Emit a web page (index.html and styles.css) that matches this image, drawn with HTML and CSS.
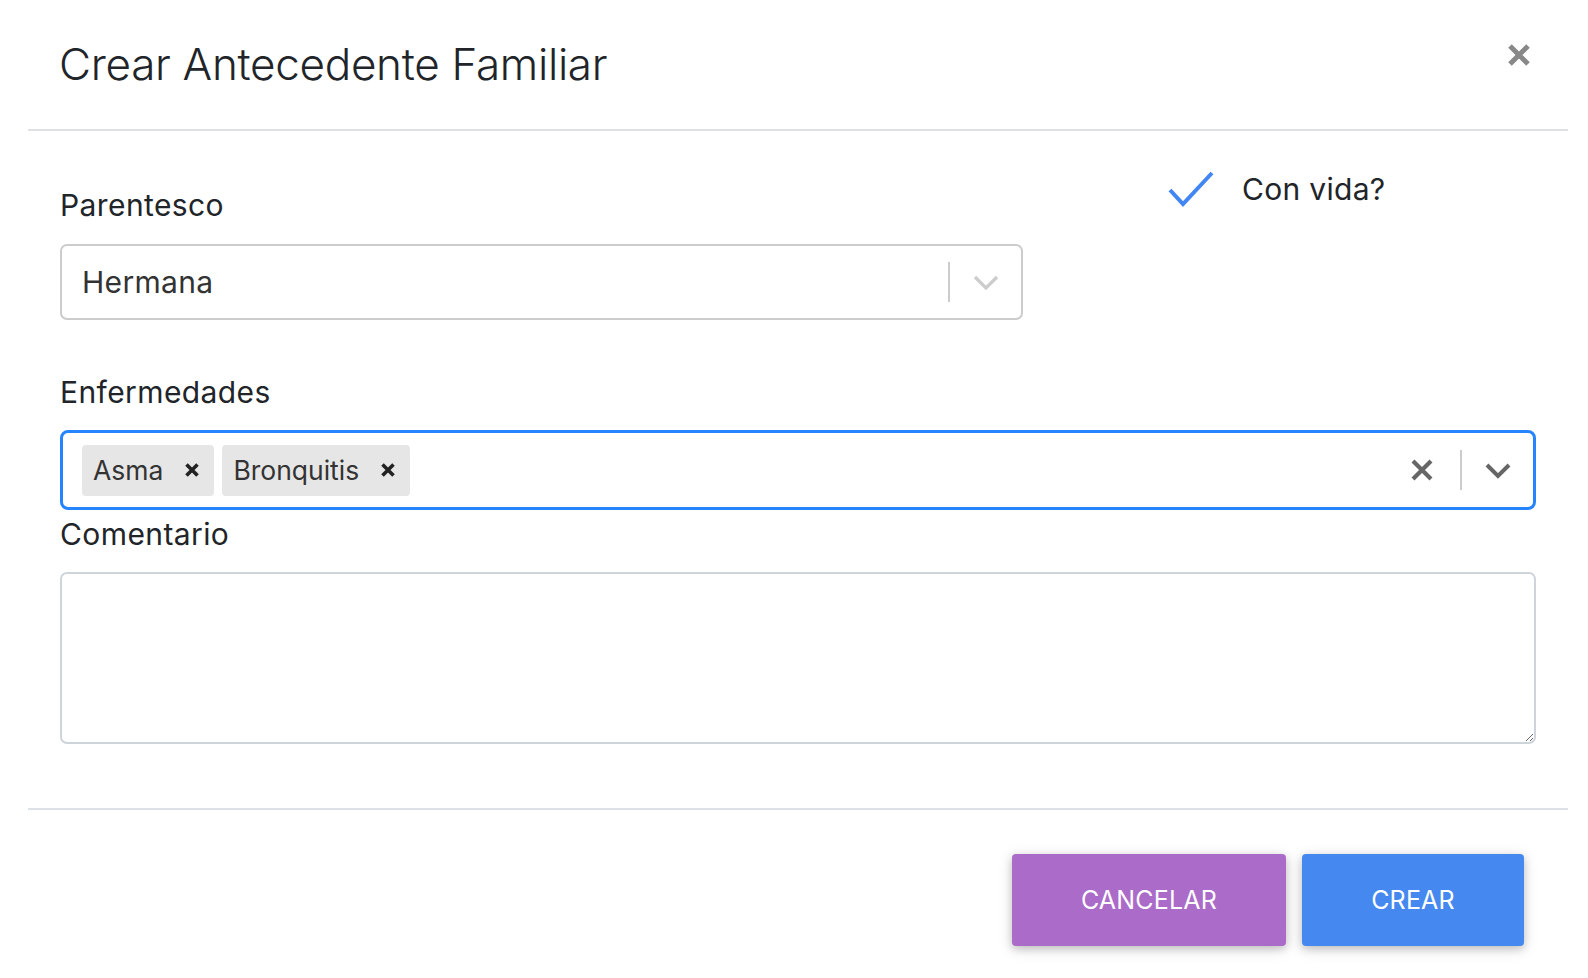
FILE: index.html
```html
<!DOCTYPE html>
<html lang="es">
<head>
<meta charset="utf-8">
<title>Crear Antecedente Familiar</title>
<link rel="stylesheet" href="styles.css">
</head>
<body>
<div class="modal">
  <div class="modal-header">
    <h4 class="modal-title">Crear Antecedente Familiar</h4>
    <button class="close" type="button" aria-label="Close">
      <svg width="24" height="24" viewBox="0 0 24 24"><path d="M3 3 L21 21 M21 3 L3 21" stroke="#888" stroke-width="5"/></svg>
    </button>
  </div>
  <div class="modal-body">
    <div class="row">
      <div class="col-main">
        <label class="field-label">Parentesco</label>
        <div class="select">
          <div class="select-value">Hermana</div>
          <div class="indicators">
            <span class="sep light"></span>
            <span class="ind">
              <svg width="26" height="18" viewBox="0 0 26 18"><path d="M2 4 L13 15 L24 4" fill="none" stroke="#ccc" stroke-width="3.2"/></svg>
            </span>
          </div>
        </div>
      </div>
      <div class="col-side">
        <label class="check">
          <svg class="check-mark" width="46" height="36" viewBox="0 0 46 36"><path d="M2 19 L15 33 L44 2" fill="none" stroke="#4285f4" stroke-width="4"/></svg>
          <span>Con vida?</span>
        </label>
      </div>
    </div>

    <label class="field-label enf">Enfermedades</label>
    <div class="multi">
      <div class="chips">
        <div class="chip"><span class="chip-text">Asma</span><span class="chip-x"><svg width="14" height="14" viewBox="0 0 14 14"><path d="M1.5 1.5 L12.5 12.5 M12.5 1.5 L1.5 12.5" stroke="#222" stroke-width="3.6"/></svg></span></div>
        <div class="chip"><span class="chip-text">Bronquitis</span><span class="chip-x"><svg width="14" height="14" viewBox="0 0 14 14"><path d="M1.5 1.5 L12.5 12.5 M12.5 1.5 L1.5 12.5" stroke="#222" stroke-width="3.6"/></svg></span></div>
      </div>
      <div class="indicators">
        <span class="ind clear">
          <svg width="22" height="22" viewBox="0 0 22 22"><path d="M2 2 L20 20 M20 2 L2 20" stroke="#666" stroke-width="4.2"/></svg>
        </span>
        <span class="sep"></span>
        <span class="ind">
          <svg width="26" height="18" viewBox="0 0 26 18"><path d="M2 4 L13 15 L24 4" fill="none" stroke="#666" stroke-width="4"/></svg>
        </span>
      </div>
    </div>

    <label class="field-label com">Comentario</label>
    <textarea class="textarea"></textarea>
  </div>
  <div class="modal-footer">
    <button class="btn btn-secondary" type="button">Cancelar</button>
    <button class="btn btn-primary" type="button">Crear</button>
  </div>
</div>
</body>
</html>
```
FILE: styles.css
```css
* { box-sizing: border-box; }
html, body { margin: 0; padding: 0; background: #fff; }
body {
  font-family: Inter, Roboto, "Liberation Sans", Arial, sans-serif;
  color: #212529;
  width: 1588px;
  height: 978px;
  overflow: hidden;
}
.modal {
  margin-left: 28px;
  width: 1540px;
}
.modal-header {
  height: 131px;
  border-bottom: 2px solid #dee2e6;
  display: flex;
  align-items: flex-start;
  justify-content: space-between;
  padding: 0 37px 0 31px;
}
.modal-title {
  margin: 0;
  margin-top: 36px;
  font-size: 44px;
  font-weight: 300;
  letter-spacing: -0.3px;
  line-height: 56px;
  color: #212529;
}
.close {
  margin-top: 43px;
  background: none;
  border: 0;
  padding: 0;
  width: 24px;
  height: 24px;
  display: flex;
}
.modal-body {
  padding: 0 32px;
}
.row {
  display: flex;
  align-items: flex-start;
}
.col-main {
  width: 963px;
  padding-top: 53px;
}
.col-side {
  padding-top: 37px;
  padding-left: 145px;
}
.field-label {
  display: block;
  font-size: 30px;
  letter-spacing: 0.4px;
  line-height: 42px;
  color: #212529;
}
.col-main .field-label { margin-bottom: 18px; }
.select {
  height: 76px;
  border: 2px solid #ccc;
  border-radius: 7px;
  display: flex;
  align-items: center;
  justify-content: space-between;
  padding-left: 20px;
}
.select-value {
  font-size: 30px;
  letter-spacing: 0.3px;
  color: #333;
}
.indicators {
  display: flex;
  align-items: center;
  height: 100%;
}
.sep {
  width: 2px;
  height: 40px;
  background: #ccc;
}
.ind {
  display: flex;
  align-items: center;
  padding: 0 22px 0 23px;
}
.check {
  display: flex;
  align-items: center;
}
.check-mark { display: block; margin-right: 28px; }
.check span {
  font-size: 30px;
  letter-spacing: 0.3px;
  line-height: 42px;
}
.enf { margin-top: 51px; margin-bottom: 17px; }
.multi {
  height: 80px;
  border: 3px solid #2684ff;
  border-radius: 8px;
  display: flex;
  align-items: center;
  justify-content: space-between;
  padding-left: 19px;
}
.chips {
  display: flex;
  gap: 8px;
}
.chip {
  height: 51px;
  background: #e6e6e6;
  border-radius: 4px;
  display: flex;
  align-items: center;
  padding-left: 11px;
}
.chip-text {
  font-size: 26.5px;
  letter-spacing: 0;
  color: #333;
}
.chip-x {
  display: flex;
  align-items: center;
  padding: 0 15px 0 22px;
}
.multi .ind.clear { padding: 0 27px 0 0; }
.multi .ind { padding: 0 22px 0 23px; }
.com { margin-top: 3px; margin-bottom: 17px; }
.textarea {
  display: block;
  width: 100%;
  height: 172px;
  border: 2px solid #ced4da;
  border-radius: 7px;
  resize: vertical;
  font-family: Inter, sans-serif;
  font-size: 28px;
}
.modal-footer {
  margin-top: 64px;
  border-top: 2px solid #dee2e6;
  display: flex;
  justify-content: flex-end;
  gap: 16px;
  padding: 44px 44px 0 0;
}
.btn {
  height: 92px;
  border: 0;
  border-radius: 4px;
  color: #fff;
  font-family: Inter, Roboto, sans-serif;
  font-size: 25px;
  text-transform: uppercase;
  letter-spacing: 0.2px;
  box-shadow: 0 3px 8px rgba(0,0,0,0.18), 0 3px 16px rgba(0,0,0,0.12);
}
.btn-secondary { width: 274px; background: #aa6bc9; }
.btn-primary { width: 222px; background: #4589f0; }
```
